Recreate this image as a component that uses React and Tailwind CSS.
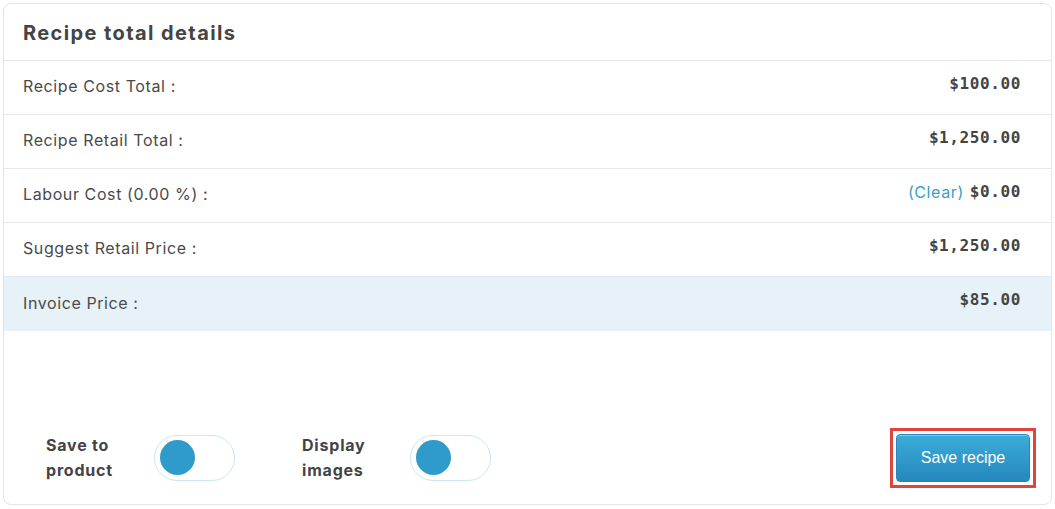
import React, { useState } from 'react';

const rows = [
  { label: 'Recipe Cost Total :', value: '$100.00' },
  { label: 'Recipe Retail Total :', value: '$1,250.00' },
  { label: 'Labour Cost (0.00 %) :', value: '$0.00', clear: true },
  { label: 'Suggest Retail Price :', value: '$1,250.00' },
  { label: 'Invoice Price :', value: '$85.00', highlight: true },
];

const Toggle = ({ on, onChange }) => (
  <button
    onClick={onChange}
    className="w-[81px] h-[46px] rounded-full border border-[#c9e7f5] bg-white flex items-center px-[5px]"
  >
    <span className={`w-[35px] h-[35px] rounded-full bg-[#2f9bcb] ${on ? 'ml-auto' : ''}`} />
  </button>
);

const App = () => {
  const [saveProduct, setSaveProduct] = useState(false);
  const [displayImages, setDisplayImages] = useState(false);

  return (
    <div className="w-[1055px] h-[509px] bg-white p-[3px] pb-[3px] font-['Inter',sans-serif] text-[#444]">
      <div className="h-[502px] w-[1049px] border border-[#e3e6e8] rounded-[8px] flex flex-col overflow-hidden">
        <div className="h-[57px] flex items-center px-[19px] border-b border-[#e6e9eb]">
          <h2 className="text-[20px] font-bold text-[#444] tracking-[1.4px] mt-[2px]">Recipe total details</h2>
        </div>
        {rows.map((r, i) => (
          <div
            key={i}
            className={`h-[54px] flex items-center justify-between pl-[19px] pr-[30px] ${i < rows.length - 1 ? 'border-b border-[#e6e9eb]' : ''} ${r.highlight ? 'bg-[#e6f1f8]' : ''}`}
          >
            <span className="text-[16px] text-[#4a4a4a] tracking-[0.6px] -mt-[3px]">{r.label}</span>
            <span className="flex items-center gap-[6px] -mt-[8px]">
              {r.clear && <span className="text-[16px] text-[#3a9fcf] tracking-[0.6px]">(Clear)</span>}
              <span className="text-[16px] font-bold text-[#444] font-['DejaVu_Sans_Mono',monospace] tracking-[0.6px]">{r.value}</span>
            </span>
          </div>
        ))}
        <div className="flex-1 flex items-end pb-[15px] pl-[42px] pr-[15px]">
          <div className="flex items-center h-[63px] w-full">
            <div className="flex items-center">
              <span className="w-[108px] text-[16px] font-bold leading-[25px] tracking-[0.8px] text-[#444]">Save to<br />product</span>
              <Toggle on={saveProduct} onChange={() => setSaveProduct(!saveProduct)} />
            </div>
            <div className="flex items-center ml-[67px]">
              <span className="w-[108px] text-[16px] font-bold leading-[25px] tracking-[0.8px] text-[#444]">Display<br />images</span>
              <Toggle on={displayImages} onChange={() => setDisplayImages(!displayImages)} />
            </div>
            <div className="ml-auto border-[3px] border-[#e2443d] p-[3px]">
              <button className="w-[134px] h-[48px] rounded-[4px] bg-gradient-to-b from-[#3badd9] to-[#2687bd] border border-[#2a86b8] text-white text-[16px] font-['Liberation_Sans',Arial,sans-serif] shadow-[inset_0_1px_0_rgba(255,255,255,0.35)]">
                Save recipe
              </button>
            </div>
          </div>
        </div>
      </div>
    </div>
  );
};

export default App;
